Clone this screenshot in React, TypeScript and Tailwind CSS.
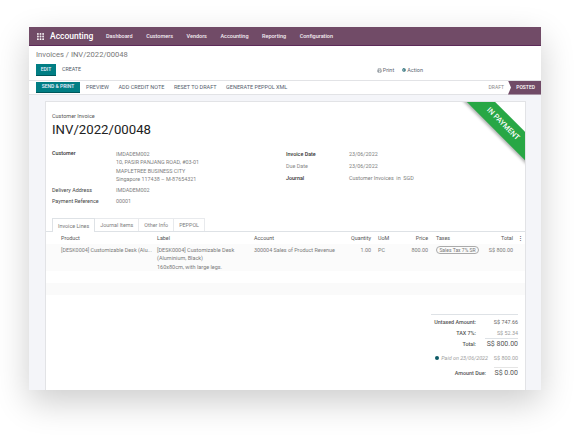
import React from 'react';
import { Grip, Printer, Settings } from 'lucide-react';

const navItems = ['Dashboard', 'Customers', 'Vendors', 'Accounting', 'Reporting', 'Configuration'];
const actions = ['PREVIEW', 'ADD CREDIT NOTE', 'RESET TO DRAFT', 'GENERATE PEPPOL XML'];
const tabs = ['Invoice Lines', 'Journal Items', 'Other Info', 'PEPPOL'];
const gridCols = 'grid grid-cols-[111px_97px_77px_45px_29px_24px_50px_36px_11px]';

const App = () => {
  return (
    <div className="w-[586px] h-[437px] bg-white overflow-hidden pt-[27px] pl-[29px] font-['Roboto',sans-serif] text-[5.4px] text-[#4c4c4c]">
      <div className="w-[512px] h-[363px] bg-white flex flex-col shadow-[0_12px_32px_rgba(0,0,0,0.2)]">
        {/* navbar */}
        <div className="h-[19px] shrink-0 bg-[#714b67] border-b border-[#5c2a58] flex items-center text-white">
          <Grip size={9} strokeWidth={3} className="ml-[7px]" />
          <span className="ml-[5px] text-[8.5px] font-medium w-[56px]">Accounting</span>
          <div className="flex gap-[13.5px] font-medium text-[5.5px] text-[#f3edf2]">
            {navItems.map((item) => (
              <span key={item}>{item}</span>
            ))}
          </div>
        </div>

        {/* control panel */}
        <div className="h-[17px] shrink-0 pl-[7px] flex items-center text-[7.6px] text-[#777]">
          Invoices / INV/2022/00048
        </div>
        <div className="h-[13px] shrink-0 pl-[7px] pt-px flex items-center">
          <span className="h-[12px] w-[20px] bg-[#017e84] border-b border-[#00575b] text-[#eef] font-medium flex items-center justify-center text-[5px]">
            EDIT
          </span>
          <span className="ml-[6px] text-[5.3px] text-[#505a66]">CREATE</span>
          <div className="ml-auto mr-[118px] flex items-center text-[5.5px] text-[#5b6570]">
            <Printer size={5} className="mr-[1px]" />
            <span>Print</span>
            <Settings size={4} strokeWidth={4} className="ml-[8px] mr-[1px] text-[#0c5a66]" />
            <span>Action</span>
          </div>
        </div>

        {/* status bar */}
        <div className="h-[15px] mt-[4px] shrink-0 border-y border-[#e2e3e6] flex items-center pl-[7px]">
          <span className="h-[11px] w-[44px] bg-[#017e84] border-b border-[#00575b] text-[#eef] font-medium flex items-center justify-center text-[5px]">
            SEND &amp; PRINT
          </span>
          <div className="ml-[6px] flex gap-[9.5px] text-[5.5px] text-[#55606d]">
            {actions.map((item) => (
              <span key={item}>{item}</span>
            ))}
          </div>
          <span className="ml-auto mr-[4px] text-[5px] text-[#8a8a8a]">DRAFT</span>
          <span className="h-[14px] w-[33px] bg-[#714b67] text-white font-medium text-[5px] flex items-center justify-end pr-[6px] [clip-path:polygon(0_0,100%_0,100%_100%,0_100%,3px_50%)]">
            POSTED
          </span>
        </div>

        {/* sheet area */}
        <div className="flex-1 min-h-0 bg-[#f4f5f9] pt-[6px] px-[16px] overflow-hidden">
          <div className="relative w-[481px] h-[289px] bg-white border-x border-t border-[#e2e3e6] overflow-hidden">
            <div className="absolute left-[412px] top-[12px] w-[90px] h-[20px] rotate-45 bg-[#28a745] text-white text-[7.4px] font-medium flex items-center justify-center shadow-[0_2px_3px_rgba(0,0,0,0.3)]">
              IN PAYMENT
            </div>

            <div className="pl-[6px] pt-[10px] text-[5.5px] leading-[8px] text-[#555]">Customer Invoice</div>
            <div className="pl-[6px] mt-[1px] text-[13.2px] leading-[17px] text-[#222]">INV/2022/00048</div>

            <div className="flex pl-[6px] mt-[11px]">
              <div className="w-[234px]">
                <div className="flex">
                  <span className="w-[64px] font-medium text-[#333]">Customer</span>
                  <div className="leading-[8.3px] pt-px text-[#808080]">
                    <div>IMDADEM002</div>
                    <div>10, PASIR PANJANG ROAD, #03-01</div>
                    <div>MAPLETREE BUSINESS CITY</div>
                    <div>Singapore 117438 – M-87654321</div>
                  </div>
                </div>
                <div className="flex mt-[3px] leading-[8px]">
                  <span className="w-[64px] text-[#444]">Delivery Address</span>
                  <span className="text-[#808080]">IMDADEM002</span>
                </div>
                <div className="flex mt-[3px] leading-[8px]">
                  <span className="w-[64px] text-[#444]">Payment Reference</span>
                  <span className="text-[#808080]">00001</span>
                </div>
              </div>
              <div className="leading-[8px] pt-px">
                <div className="flex">
                  <span className="w-[63px] font-medium text-[#333]">Invoice Date</span>
                  <span className="text-[#808080]">23/06/2022</span>
                </div>
                <div className="flex mt-[4px]">
                  <span className="w-[63px] text-[#888]">Due Date</span>
                  <span className="text-[#808080]">23/06/2022</span>
                </div>
                <div className="flex mt-[4px]">
                  <span className="w-[63px] font-medium text-[#333]">Journal</span>
                  <span className="text-[#808080]">Customer Invoices&nbsp;&nbsp;in&nbsp;&nbsp;SGD</span>
                </div>
              </div>
            </div>

            {/* tabs */}
            <div className="mt-[13px] h-[14px] border-b border-[#dee2e6] flex pl-[6px]">
              {tabs.map((tab, index) => (
                <div
                  key={tab}
                  className={
                    index === 0
                      ? 'h-[14px] px-[5px] flex items-center bg-white border-x border-t border-[#dee2e6] text-[#777]'
                      : 'h-[13px] px-[5px] flex items-center border-r border-t border-[#e8eaed] text-[#808080]'
                  }
                >
                  {tab}
                </div>
              ))}
            </div>

            {/* lines */}
            <div className={`${gridCols} h-[12px] items-center text-[#555] shadow-[0_1px_1px_rgba(0,0,0,0.08)]`}>
              <span className="pl-[15px]">Product</span>
              <span>Label</span>
              <span>Account</span>
              <span className="text-right pr-[5px]">Quantity</span>
              <span className="pl-[2px]">UoM</span>
              <span className="text-right pr-px">Price</span>
              <span className="pl-[7px]">Taxes</span>
              <span className="text-right pr-[2px]">Total</span>
              <span className="text-center font-bold">⋮</span>
            </div>
            <div className={`${gridCols} h-[27px] bg-[#fbfbfb] text-[#7a7a7a] pt-[2px] leading-[8.2px]`}>
              <span className="pl-[15px] truncate pr-[2px]">[DESK0004] Customizable Desk (Alu...</span>
              <span className="text-[5.5px]">
                [DESK0004] Customizable Desk
                <br />
                (Aluminium, Black)
                <br />
                160x80cm, with large legs.
              </span>
              <span className="whitespace-nowrap">300004 Sales of Product Revenue</span>
              <span className="text-right pr-[5px]">1.00</span>
              <span className="pl-[2px]">PC</span>
              <span className="text-right pr-px">800.00</span>
              <span className="pl-[7px]">
                <span className="block w-[43px] h-[8px] leading-[7px] text-center rounded-full border border-[#aaa] text-[#777] text-[5px] whitespace-nowrap">
                  Sales Tax 7% SR
                </span>
              </span>
              <span className="text-right pr-[2px] whitespace-nowrap">S$ 800.00</span>
              <span />
            </div>
            <div className="h-[12px]" />
            <div className="h-[12px] bg-[#fafafa]" />

            {/* totals */}
            <div className="flex justify-end mt-[19px] mr-[7px]">
              <div className="w-[87px] border-t border-[#dee2e6] pt-[1px]">
                <div className="flex justify-end items-center h-[11px] text-[#555]">
                  <span className="font-medium">Untaxed Amount:</span>
                  <span className="w-[42px] text-right text-[#666]">S$ 747.66</span>
                </div>
                <div className="flex justify-end items-center h-[11px]">
                  <span className="font-medium text-[#555]">TAX 7%:</span>
                  <span className="w-[42px] text-right text-[#999]">S$ 52.34</span>
                </div>
                <div className="flex justify-end items-center h-[12px]">
                  <span className="font-medium text-[#555]">Total:</span>
                  <span className="ml-[9px] w-[33px] border-t border-[#dee2e6] text-right text-[7px] text-[#555] whitespace-nowrap">
                    S$ 800.00
                  </span>
                </div>
              </div>
            </div>
            <div className="flex justify-end items-center mr-[7px] mt-[3px] h-[10px] text-[#a0a0a0]">
              <span className="w-[4px] h-[4px] rounded-full bg-[#0c5a66] mr-[2px]" />
              <span className="italic">Paid on 23/06/2022</span>
              <span className="w-[30px] text-right">S$ 800.00</span>
            </div>
            <div className="flex justify-end items-center mr-[7px] mt-[4px] h-[12px]">
              <span className="font-medium text-[#555]">Amount Due:</span>
              <span className="ml-[8px] w-[24px] border-t border-[#e5e5e5] text-right text-[7px] text-[#555] whitespace-nowrap">
                S$ 0.00
              </span>
            </div>
          </div>
        </div>
      </div>
    </div>
  );
};

export default App;
